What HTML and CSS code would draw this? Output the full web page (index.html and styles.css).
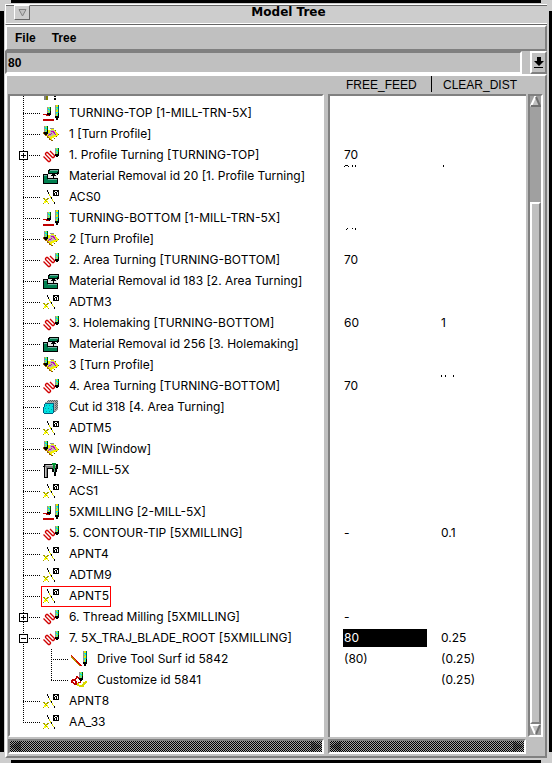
FILE: index.html
```html
<!DOCTYPE html>
<html lang="en">
<head>
<meta charset="utf-8">
<title>Model Tree</title>
<link rel="stylesheet" href="styles.css">
</head>
<body>
<svg class="defs" width="0" height="0" aria-hidden="true">
  <defs>
    <g id="tool">
      <path fill="#909090" d="M0 0h1v6H0z"/><path fill="#00e8e8" d="M1 0h2v6H1z"/><path fill="#e8e800" d="M1 0h1v1H1zM2 1h1v1H2zM1 3h1v1H1zM2 4h1v1H2zM1 5h1v1H1z"/>
      <path fill="#006000" d="M3 0h1v6H3z"/><path d="M0 6h4v2H0zM1 8h2v1H1zM3 4h1v2H3z"/>
    </g>
    <g id="longtool">
      <path fill="#909090" d="M0 0h1v11H0z"/><path fill="#00e8e8" d="M1 0h2v11H1z"/><path fill="#e8e800" d="M1 0h2v2H1zM1 3h1v1H1zM2 4h1v1H2zM1 5h2v2H1zM2 8h1v1H2zM1 9h1v2H1z"/>
      <path fill="#006060" d="M3 0h1v11H3z"/><path d="M0 11h4v2H0zM1 13h2v2H1zM3 8h1v3H3z"/>
    </g>
    <symbol id="setup" viewBox="0 0 16 16">
      <use href="#tool" x="4" y="2"/><use href="#longtool" x="12"/>
      <path fill="#c00000" d="M0 9h4v1H0zM3 10h3v1H3zM0 14h11v2H0z"/>
    </symbol>
    <symbol id="profile" viewBox="0 0 16 16">
      <path fill="#a06000" d="M0 6h2v1h2v2h2v2h2v2h1v2H8v-1H6v-2H4v-2H2V9H1V8H0z"/>
      <path fill="#f0f000" d="M8 3h3v1h2v2h1v1h1v1h1v1h-1v1h-2v1h-2v1h-2v2H8v-1H7v-1H6v-1H5v-1H4V9H3V8H2V6h3V4h3z"/>
      <path fill="#c0b8a8" d="M7 4h4v1h1v2h1v1h-1v1h-2v1H8v1H7v-1H6V9H5V7h2z"/>
      <path fill="#c000c0" d="M8 5h3v1h1v2h1v1h-1V8h-1V7h-1V6H8zM8 7h1v1H8v1H6v1H5V9h1V8h2z"/>
      <path fill="#909090" d="M7 2h4v1H7z"/><path fill="#806000" d="M12 4h1v1h-1zM15 8h1v1h-1zM13 10h1v1h-1zM11 12h1v1h-1zM9 14h1v1H9z"/>
      <use href="#tool" x="1" y="0"/>
    </symbol>
    <symbol id="path" viewBox="0 0 16 16">
      <path shape-rendering="geometricPrecision" fill="none" stroke="#d00000" stroke-width="1.300" d="M.5 9.500 5.500 14.500H6.500L7.500 13.500V12.500L2.500 7.500V6.500L3.500 5.500H4.500L9.500 10.500H10.500L11.500 9.500V8.500L7 4"/>
      <use href="#tool" x="12" y="1"/>
    </symbol>
    <symbol id="removal" viewBox="0 0 16 16">
      <path d="M6 1h10v4l-1 1H5V2zM0 6h5v4h10v5l-1 1H0z"/><path fill="#008050" d="M7 2h8v2h-1v1H6V3h1zM1 8h3v3h10v4H1z"/><path fill="#70b0a0" d="M7 2h8v1H7zM1 7h3v1H1zM5 11h9v1H5z"/>
      <path fill="#e8e8e8" d="M5 6h9v4H5z"/><path d="M10 5h1v1h1v1h1v1h-2v3h-1V8H8V7h1V6h1zM14 6h1v1h-1z"/>
    </symbol>
    <symbol id="datum" viewBox="0 0 16 16">
      <path d="M4 1h1v2H4zM5 3h1v2H5zM8 8h1v2H8zM11 13h1v2h-1zM10 1h6v6h-6z"/><path fill="#d8d800" d="M6 5h1v2H6zM7 7h1v2H7zM9 10h1v2H9zM10 12h1v1h-1z"/>
      <path fill="#a0a000" d="M0 9h2v1H0zM4 9h2v1H4zM1 10h2v1H1zM3 10h2v1H3zM2 11h2v2H2zM1 13h1v1H1zM4 13h1v1H4zM0 14h1v1H0zM5 14h1v1H5z"/><path fill="#ffff00" d="M2 10h1v1H2zM3 11h1v1H3zM1 12h2v2H1zM4 12h1v2H4z"/>
      <path fill="#fff" d="M12 2h2v1h-2zM11 3h1v1h-1zM14 3h1v3h-1zM12 4h1v2h-1z"/>
    </symbol>
    <symbol id="cut" viewBox="0 0 16 16">
      <path fill="#a8a8a8" d="M5 1h10v10h-1v1h-1v1h-2V4H2V3h2V2h1z"/>
      <path fill="#606060" d="M5 1h1v1H5zM7 1h1v1H7zM9 1h1v1H9zM11 1h1v1h-1zM13 1h1v1h-1zM4 2h1v1H4zM6 2h1v1H6zM8 2h1v1H8zM10 2h1v1h-1zM12 2h1v1h-1zM14 2h1v1h-1zM13 3h1v1h-1zM12 4h1v1h-1zM14 4h1v1h-1zM13 5h1v1h-1zM12 6h1v1h-1zM14 6h1v1h-1zM13 7h1v1h-1zM12 8h1v1h-1zM14 8h1v1h-1zM13 9h1v1h-1zM12 10h1v1h-1zM11 12h1v1h-1z"/>
      <path fill="#00e0e0" d="M2 4h9v9h-1v1H1V5h1z"/><path fill="#00a0a0" d="M3 6h1v1H3zM6 6h1v1H6zM9 7h1v1H9zM2 9h1v1H2zM5 9h1v1H5zM8 10h1v1H8zM3 12h1v1H3zM6 12h1v1H6z"/>
      <path fill="#006080" d="M2 4h9v1H2zM1 5h1v3H1zM0 8h1v6H0zM1 14h9v1H1zM10 5h1v9h-1z"/>
    </symbol>
    <symbol id="mill" viewBox="0 0 16 16">
      <path d="M1 2h14v5H5v9H1V5H0V4h1z"/><path fill="#808080" d="M2 3h12v3H4v9H2z"/><path fill="#c0c0c0" d="M3 3h10v1H3zM2 5h1v10H2z"/><path fill="#009030" d="M9 1h4v2H9zM10 3h2v4h-2z"/><path d="M9 7h5v3H9zM11 10h2v4h-2zM13 2h1v6h-1z"/><path fill="#60a080" d="M11 7h1v3h-1z"/>
    </symbol>
    <symbol id="drive" viewBox="0 0 16 16">
      <path fill="none" stroke="#b09000" stroke-width="2" d="m.5 5.500 10 9.500"/><path fill="none" stroke="#e00000" d="m.5 4.500 10 10.500"/>
      <use href="#longtool" x="12"/>
    </symbol>
    <symbol id="custom" viewBox="0 0 16 16">
      <path fill="none" stroke="#c00000" stroke-width="1.500" d="M1 8v2l3 2 1-2-1-2 2-3 2 1M1 8h3M5 12l5-2"/><path fill="none" stroke="#d8d800" stroke-width="2" d="M7 11v2l2 1h3l1-3 3-1"/>
      <use href="#tool" x="8" y="0"/>
    </symbol>
  </defs>
</svg>
<main class="window">
  <i class="grip tl"></i><i class="grip tr"></i><i class="grip bl"></i><i class="grip br"></i>
  <header class="titlebar">
    <button class="sysmenu" aria-label="Window menu"><svg width="9" height="8" viewBox="0 0 9 8"><path fill="#c0c0c0" stroke="#808080" d="M1 .5h7L4.500 7z"/></svg></button>
    <h1>Model Tree</h1>
  </header>
  <nav class="menubar"><button>File</button><button>Tree</button></nav>
  <div class="entry">
    <input type="text" value="80" aria-label="Value">
    <button aria-label="Show values"><svg width="10" height="12" viewBox="0 0 10 12"><path d="M3 0h4v4h3L5 9 0 4h3zM0 10h9v1H0z"/></svg></button>
  </div>
  <section class="panel">
    <ul class="tree">
      <li class="partial"><svg width="16" height="4"><path fill="#808080" d="M1 0h2v4H1z"/><path fill="#808000" d="M3 0h2v4H3z"/><path d="M11 0h2v1h-2zM11 2h2v2h-2z"/></svg></li>
      <li><div class="node"><svg><use href="#setup"/></svg>TURNING-TOP [1-MILL-TRN-5X]</div></li>
      <li><div class="node"><svg><use href="#profile"/></svg>1 [Turn Profile]</div></li>
      <li><button class="toggle plus" aria-label="Expand"></button><div class="node"><svg><use href="#path"/></svg>1. Profile Turning [TURNING-TOP]</div></li>
      <li><div class="node"><svg><use href="#removal"/></svg>Material Removal id 20 [1. Profile Turning]</div></li>
      <li><div class="node"><svg><use href="#datum"/></svg>ACS0</div></li>
      <li><div class="node"><svg><use href="#setup"/></svg>TURNING-BOTTOM [1-MILL-TRN-5X]</div></li>
      <li><div class="node"><svg><use href="#profile"/></svg>2 [Turn Profile]</div></li>
      <li><div class="node"><svg><use href="#path"/></svg>2. Area Turning [TURNING-BOTTOM]</div></li>
      <li><div class="node"><svg><use href="#removal"/></svg>Material Removal id 183 [2. Area Turning]</div></li>
      <li><div class="node"><svg><use href="#datum"/></svg>ADTM3</div></li>
      <li><div class="node"><svg><use href="#path"/></svg>3. Holemaking [TURNING-BOTTOM]</div></li>
      <li><div class="node"><svg><use href="#removal"/></svg>Material Removal id 256 [3. Holemaking]</div></li>
      <li><div class="node"><svg><use href="#profile"/></svg>3 [Turn Profile]</div></li>
      <li><div class="node"><svg><use href="#path"/></svg>4. Area Turning [TURNING-BOTTOM]</div></li>
      <li><div class="node"><svg><use href="#cut"/></svg>Cut id 318 [4. Area Turning]</div></li>
      <li><div class="node"><svg><use href="#datum"/></svg>ADTM5</div></li>
      <li><div class="node"><svg><use href="#profile"/></svg>WIN [Window]</div></li>
      <li><div class="node"><svg><use href="#mill"/></svg>2-MILL-5X</div></li>
      <li><div class="node"><svg><use href="#datum"/></svg>ACS1</div></li>
      <li><div class="node"><svg><use href="#setup"/></svg>5XMILLING [2-MILL-5X]</div></li>
      <li><div class="node"><svg><use href="#path"/></svg>5. CONTOUR-TIP [5XMILLING]</div></li>
      <li><div class="node"><svg><use href="#datum"/></svg>APNT4</div></li>
      <li><div class="node"><svg><use href="#datum"/></svg>ADTM9</div></li>
      <li><div class="node selected"><svg><use href="#datum"/></svg>APNT5</div></li>
      <li><button class="toggle plus" aria-label="Expand"></button><div class="node"><svg><use href="#path"/></svg>6. Thread Milling [5XMILLING]</div></li>
      <li><button class="toggle" aria-label="Collapse"></button><div class="node"><svg><use href="#path"/></svg>7. 5X_TRAJ_BLADE_ROOT [5XMILLING]</div>
        <ul class="children">
          <li><div class="node"><svg><use href="#drive"/></svg>Drive Tool Surf id 5842</div></li>
          <li><div class="node"><svg><use href="#custom"/></svg>Customize id 5841</div></li>
        </ul>
      </li>
      <li><div class="node"><svg><use href="#datum"/></svg>APNT8</div></li>
      <li><div class="node"><svg><use href="#datum"/></svg>AA_33</div></li>
    </ul>
    <table class="values">
      <thead><tr><th scope="col">FREE_FEED</th><th scope="col"><span>CLEAR_DIST</span></th></tr></thead>
      <tbody>
        <tr class="top"><td></td><td></td></tr>
        <tr><td></td><td></td></tr>
        <tr><td></td><td></td></tr>
        <tr><td>70</td><td></td></tr>
        <tr class="residue"><td><svg width="14" height="3"><path d="M0 1h1v1H0zM1 0h3v1H1zM4 1h1v1H4zM8 0h1v2H8zM11 0h1v2h-1z"/></svg></td><td><svg width="14" height="3"><path d="M2 0h1v2H2z"/></svg></td></tr>
        <tr><td></td><td></td></tr>
        <tr><td></td><td></td></tr>
        <tr class="residue"><td><svg width="14" height="3"><path d="M2 1h1v1H2zM3 0h1v1H3zM8 0h1v1H8zM11 0h1v2h-1z"/></svg></td><td></td></tr>
        <tr><td>70</td><td></td></tr>
        <tr><td></td><td></td></tr>
        <tr><td></td><td></td></tr>
        <tr><td>60</td><td>1</td></tr>
        <tr><td></td><td></td></tr>
        <tr><td></td><td></td></tr>
        <tr class="residue"><td class="mid">70</td><td><svg width="14" height="3"><path d="M0 0h1v2H0zM4 0h1v2H4zM12 0h1v2h-1z"/></svg></td></tr>
        <tr><td></td><td></td></tr>
        <tr><td></td><td></td></tr>
        <tr><td></td><td></td></tr>
        <tr><td></td><td></td></tr>
        <tr><td></td><td></td></tr>
        <tr><td></td><td></td></tr>
        <tr><td>-</td><td>0.1</td></tr>
        <tr><td></td><td></td></tr>
        <tr><td></td><td></td></tr>
        <tr><td></td><td></td></tr>
        <tr><td>-</td><td></td></tr>
        <tr><td class="edit"><span>80</span></td><td>0.25</td></tr>
        <tr><td>(80)</td><td>(0.25)</td></tr>
        <tr><td></td><td>(0.25)</td></tr>
        <tr><td></td><td></td></tr>
        <tr><td></td><td></td></tr>
        <tr class="end"><td></td><td></td></tr>
      </tbody>
    </table>
    <div class="vscroll">
      <svg viewBox="0 0 11 11"><path fill="#c0c0c0" d="M5 0 11 11H0z"/><path fill="none" stroke="#fff" stroke-width="2" d="M5.500 0 1 10"/><path fill="none" stroke="#707070" stroke-width="2" d="M6 1l4 9H1"/></svg>
      <i class="gap"></i><i class="thumb"></i>
      <svg viewBox="0 0 11 11"><path fill="#c0c0c0" d="M0 0h11L5.500 11z"/><path fill="none" stroke="#fff" stroke-width="2" d="M10 1H1l4 9"/><path fill="none" stroke="#707070" stroke-width="2" d="M10 1 6 10"/></svg>
    </div>
    <div class="hscroll"><svg viewBox="0 0 11 11"><path d="M11 0v11L0 5.500z"/></svg><svg viewBox="0 0 11 11"><path d="M0 0v11l11-5.500z"/></svg></div>
    <div class="hscroll"><svg viewBox="0 0 11 11"><path d="M11 0v11L0 5.500z"/></svg><svg viewBox="0 0 11 11"><path d="M0 0v11l11-5.500z"/></svg></div>
  </section>
</main>
</body>
</html>
```
FILE: styles.css
```css
* { box-sizing: border-box; }
body {
  margin: 0;
  padding: 3px 3px 3px 4px;
  background: #000;
  color: #000;
  font: 12px/18px Inter, "Liberation Sans", Arial, sans-serif;
}
.defs { position: absolute; }
button { margin: 0; padding: 0; border: 0; background: none; color: inherit; font: inherit; }
svg { display: block; flex: none; }
ul { list-style: none; margin: 0; padding: 0; }

.window {
  background: #c0c0c0;
  border: solid #cdcdcd;
  border-width: 1px 2px 2px 1px;
}
.grip { position: absolute; width: 11px; height: 11px; border: 0 solid #cdcdcd; }
.tl { left: 0; top: 0; border-width: 4px 0 0 4px; }
.tr { right: 0; top: 0; border-width: 4px 4px 0 0; }
.bl { left: 0; top: 752px; border-width: 0 0 4px 4px; }
.br { right: 0; top: 752px; border-width: 0 4px 4px 0; }

.titlebar {
  display: flex;
  height: 21px;
  background: #cdcdcd;
  border: solid #fff;
  border-width: 1px 0 1px 1px;
  box-shadow: inset 0 1px #666, inset 0 -1px #fff;
  border-bottom-color: #666;
}
.titlebar h1 {
  flex: 1;
  margin: 0;
  text-align: center;
  font: bold 12px/15px "DejaVu Sans", sans-serif;
}
.sysmenu {
  display: grid;
  place-items: center;
  width: 16px;
  height: 15px;
  margin-left: 8px;
  border: 1px solid #fff;
  border-right-color: #666;
  border-bottom-color: #666;
}
.menubar, .panel {
  border: 2px solid #fff;
  border-right-color: #808080;
  border-bottom-color: #808080;
}
.menubar {
  display: flex;
  gap: 16px;
  height: 26px;
  padding: 0 8px;
  font: bold 12px/18px "Liberation Sans", Arial, sans-serif;
}
.entry { display: flex; gap: 8px; height: 23px; }
.entry input {
  flex: 1;
  min-width: 0;
  padding: 0 0 0 1px;
  border: 2px solid #808080;
  border-right-color: #fff;
  border-bottom-color: #fff;
  border-radius: 0;
  outline: 0;
  background: #c0c0c0;
  font: bold 12px "Liberation Sans", sans-serif;
}
.entry button {
  display: grid;
  place-items: center;
  width: 17px;
  border: 2px solid #fff;
  border-right-color: #808080;
  border-bottom-color: #808080;
}

.panel {
  display: grid;
  grid-template-columns: minmax(0, 316fr) 4px minmax(0, 198fr) 2px 15px;
  row-gap: 2px;
  padding: 0 2px 2px 1px;
}
.tree {
  margin-top: 18px;
  border: 2px solid #808080;
  border-right-color: #fff;
  border-bottom-color: #fff;
  background: #fff repeating-linear-gradient(#000 0 1px, #fff 1px 2px) 13px 0 / 1px calc(100% - 13px) no-repeat;
}
.tree li { position: relative; padding-left: 31px; }
.tree li::before {
  content: "";
  position: absolute;
  left: 13px;
  top: 10px;
  width: 18px;
  height: 1px;
  background: repeating-linear-gradient(90deg, #000 0 1px, #fff 1px 2px);
}
.tree .partial { height: 7px; padding-left: 33px; }
.tree .partial::before { display: none; }
.node {
  display: flex;
  align-items: center;
  gap: 10px;
  width: max-content;
  height: 21px;
  padding: 0 1px 1px;
  border: 1px solid transparent;
  white-space: nowrap;
}
.node svg { width: 16px; height: 16px; shape-rendering: crispEdges; }
.selected { border-color: #f00; }
.children {
  margin-left: -3px;
  background: repeating-linear-gradient(#000 0 1px, #fff 1px 2px) 13px 0 / 1px calc(100% - 10px) no-repeat;
}
.toggle {
  position: absolute;
  z-index: 1;
  left: 9px;
  top: 6px;
  width: 9px;
  height: 9px;
  border: 1px solid #000;
  background: linear-gradient(#000, #000) center / 5px 1px no-repeat, #fff;
}
.plus {
  background: linear-gradient(#000, #000) center / 5px 1px no-repeat, linear-gradient(#000, #000) center / 1px 5px no-repeat, #fff;
}

.values {
  grid-column: 3;
  width: 100%;
  table-layout: fixed;
  border-spacing: 0;
  background: #fff;
}
.values th {
  height: 20px;
  padding: 0 0 0 18px;
  border-bottom: 2px solid #808080;
  background: #c0c0c0;
  font: 12px/18px "Liberation Sans", Arial, sans-serif;
  text-align: left;
}
.values th:first-child { width: 103px; }
.values th + th { padding: 0 0 2px; }
.values th span { display: block; height: 16px; padding-left: 11px; border-left: 1px solid #000; }
.values td { height: 21px; padding: 0 0 0 10px; }
.values td:first-child { padding-left: 14px; border-left: 2px solid #808080; }
.values .top td { height: 6px; }
.values .end td { height: 5px; }
.values .residue td { vertical-align: top; }
.values .residue .mid { vertical-align: middle; }
.values td.edit:first-child { padding-left: 13px; }
.edit span { display: block; width: 84px; padding-left: 1px; background: #000; color: #fff; }

.vscroll {
  grid-column: 5;
  display: flex;
  flex-direction: column;
  margin-top: 18px;
  border: 2px solid #808080;
  border-right-color: #fff;
  border-bottom-color: #fff;
  background: #a0a0a0;
}
.vscroll svg, .hscroll svg { width: 11px; height: 11px; }
.gap { flex: 96; }
.thumb {
  flex: 521;
  border: 2px solid #fff;
  border-right-color: #808080;
  border-bottom-color: #808080;
  background: #c0c0c0;
}
.hscroll {
  grid-column: 1;
  display: flex;
  justify-content: space-between;
  height: 15px;
  border: 2px solid #808080;
  border-right-color: #fff;
  border-bottom-color: #fff;
  background: conic-gradient(#000 25%, #a0a0a0 0 50%, #000 0 75%, #a0a0a0 0) 0 0 / 2px 2px;
}
.hscroll + .hscroll { grid-column: 3; }
.hscroll path { fill: #000; fill-opacity: .35; }
```
